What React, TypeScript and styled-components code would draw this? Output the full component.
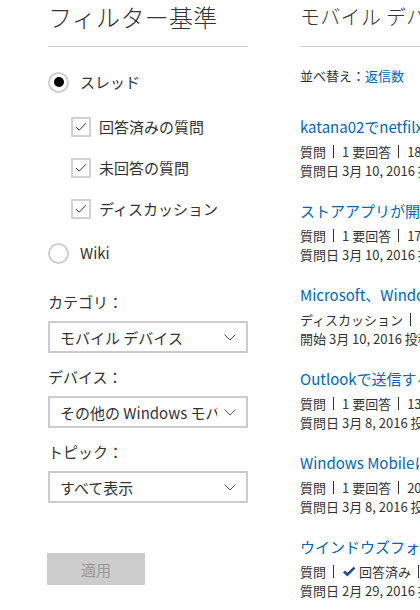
import React from "react";
import styled, {createGlobalStyle} from "styled-components";

const GlobalStyle = createGlobalStyle`
  html, body {
    margin: 0;
    padding: 0;
    background: #fff;
    overflow: hidden;
  }

  body {
    font-family: "Noto Sans CJK JP", "Noto Sans", sans-serif;
    color: #333;
  }
`;

const Page = styled.div`
  display: flex;
  gap: 52px;
  padding-left: 48px;
  width: 900px;
`;

const Sidebar = styled.div`
  display: flex;
  flex-direction: column;
  width: 200px;
  flex-shrink: 0;
`;

const Main = styled.div`
  display: flex;
  flex-direction: column;
  width: 520px;
  flex-shrink: 0;
`;

const Heading = styled.h1<{$size: number}>`
  margin: 1px 0 0 0;
  font-size: ${(p) => p.$size}px;
  font-weight: 300;
  line-height: 32px;
  letter-spacing: 0.3px;
  color: #333;
  white-space: nowrap;
`;

const Divider = styled.div`
  height: 1px;
  margin-top: 13px;
  background: #ccc;
`;

const OptionRow = styled.label<{$indent?: boolean}>`
  display: flex;
  align-items: center;
  gap: ${(p) => (p.$indent ? "8px" : "11px")};
  height: 24px;
  font-size: 15px;
  line-height: 24px;
  white-space: nowrap;
`;

const RadioCircle = styled.span<{$checked?: boolean}>`
  box-sizing: border-box;
  width: 21px;
  height: 21px;
  border-radius: 50%;
  border: 2px solid #cfcfcf;
  display: flex;
  align-items: center;
  justify-content: center;

  &::after {
    content: "";
    width: 10px;
    height: 10px;
    border-radius: 50%;
    background: ${(p) => (p.$checked ? "#000" : "transparent")};
  }
`;

const CheckBox = styled.span`
  box-sizing: border-box;
  width: 20px;
  height: 20px;
  border: 2px solid #d2d2d2;
  display: flex;
  align-items: center;
  justify-content: center;
`;

const ThreadGroup = styled.div`
  display: flex;
  flex-direction: column;
  gap: 17px;
  padding-left: 23px;
  margin-top: 21px;
`;

const FieldLabel = styled.div<{$first?: boolean}>`
  margin-top: ${(p) => (p.$first ? "27px" : "14px")};
  font-size: 15px;
  line-height: 20px;
`;

const SelectBox = styled.div`
  box-sizing: border-box;
  display: flex;
  align-items: center;
  gap: 7px;
  height: 32px;
  margin-top: 9px;
  padding: 0 10px 0 10px;
  border: 2px solid #ccc;
  font-size: 15px;
`;

const SelectValue = styled.span`
  flex: 1;
  overflow: hidden;
  white-space: nowrap;
`;

const ApplyButton = styled.button`
  width: 98px;
  height: 32px;
  margin-top: 50px;
  margin-left: -1px;
  border: none;
  background: #ccc;
  color: #999;
  font-family: inherit;
  font-size: 15px;
`;

const SortLine = styled.div`
  margin-top: 19px;
  font-size: 13px;
  line-height: 20px;
  white-space: nowrap;
`;

const Link = styled.a`
  color: #0067b8;
  text-decoration: none;
`;

const ThreadList = styled.div`
  display: flex;
  flex-direction: column;
  gap: 20px;
  margin-top: 30px;
`;

const Thread = styled.div`
  display: flex;
  flex-direction: column;
`;

const ThreadTitle = styled.a`
  color: #0067b8;
  text-decoration: none;
  font-size: 15px;
  line-height: 22px;
  white-space: nowrap;
  margin-bottom: 4px;
`;

const MetaLine = styled.div`
  display: flex;
  align-items: center;
  font-size: 13px;
  line-height: 19px;
  white-space: pre;
`;

const Sep = styled.span`
  display: inline-block;
  width: 1px;
  height: 13px;
  margin: 0 8px 0 7px;
  background: #333;
`;

const Answered = styled.span`
  display: inline-flex;
  align-items: center;
  gap: 3px;
`;

const Chevron = () => (
  <svg width="12" height="7" viewBox="0 0 12 7" fill="none">
    <polyline points="0.5,0.5 6,6 11.5,0.5" stroke="#555" strokeWidth="1" />
  </svg>
);

const Tick = () => (
  <svg width="12" height="10" viewBox="0 0 12 10" fill="none">
    <polyline points="1,5 4.2,8.2 11,1.2" stroke="#333" strokeWidth="1" />
  </svg>
);

const BoldTick = () => (
  <svg width="14" height="12" viewBox="0 0 14 12">
    <path d="M1 6.2 L3 4.4 L5.4 6.8 L11.6 0.8 L13.4 2.6 L5.4 10.6 Z" fill="#1d4f8c" />
  </svg>
);

type Item = {
  title: string;
  kind: string;
  status: "open" | "answered" | "discussion";
  count: string;
  dateLabel: string;
  date: string;
};

const threads: Item[] = [
  {title: "katana02でnetfilxが見られない", kind: "質問", status: "open", count: "18 表示", dateLabel: "質問日", date: "3月 10, 2016"},
  {title: "ストアアプリが開かない", kind: "質問", status: "open", count: "17 表示", dateLabel: "質問日", date: "3月 10, 2016"},
  {title: "Microsoft、Windows 10 Mobile の配信を開始", kind: "ディスカッション", status: "discussion", count: "1 返信", dateLabel: "開始", date: "3月 10, 2016"},
  {title: "Outlookで送信するとエラーになる", kind: "質問", status: "open", count: "13 表示", dateLabel: "質問日", date: "3月 8, 2016"},
  {title: "Windows Mobileについて", kind: "質問", status: "open", count: "20 表示", dateLabel: "質問日", date: "3月 8, 2016"},
  {title: "ウインドウズフォンのアップデート", kind: "質問", status: "answered", count: "5 返信", dateLabel: "質問日", date: "2月 29, 2016"},
];

const App: React.FC = () => {
  return (
    <>
      <GlobalStyle />
      <Page>
        <Sidebar>
          <Heading $size={24}>フィルター基準</Heading>
          <Divider />
          <OptionRow style={{marginTop: 23}}>
            <RadioCircle $checked />
            スレッド
          </OptionRow>
          <ThreadGroup>
            {["回答済みの質問", "未回答の質問", "ディスカッション"].map((label) => (
              <OptionRow $indent key={label}>
                <CheckBox>
                  <Tick />
                </CheckBox>
                {label}
              </OptionRow>
            ))}
          </ThreadGroup>
          <OptionRow style={{marginTop: 20}}>
            <RadioCircle />
            Wiki
          </OptionRow>

          <FieldLabel $first>カテゴリ：</FieldLabel>
          <SelectBox>
            <SelectValue>モバイル デバイス</SelectValue>
            <Chevron />
          </SelectBox>
          <FieldLabel>デバイス：</FieldLabel>
          <SelectBox>
            <SelectValue>その他の Windows モバイル デバイス</SelectValue>
            <Chevron />
          </SelectBox>
          <FieldLabel>トピック：</FieldLabel>
          <SelectBox>
            <SelectValue>すべて表示</SelectValue>
            <Chevron />
          </SelectBox>

          <ApplyButton disabled>適用</ApplyButton>
        </Sidebar>

        <Main>
          <Heading $size={20}>モバイル デバイス</Heading>
          <Divider />
          <SortLine>
            並べ替え：<Link href="#">返信数</Link>
          </SortLine>
          <ThreadList>
            {threads.map((t) => (
              <Thread key={t.title}>
                <ThreadTitle href="#">{t.title}</ThreadTitle>
                <MetaLine>
                  {t.kind}
                  <Sep />
                  {t.status === "answered" ? (
                    <Answered>
                      <BoldTick />
                      回答済み
                    </Answered>
                  ) : t.status === "discussion" ? (
                    "1 返信"
                  ) : (
                    "1 要回答"
                  )}
                  <Sep />
                  {t.count}
                </MetaLine>
                <MetaLine>
                  {t.dateLabel} {t.date} 投稿者
                </MetaLine>
              </Thread>
            ))}
          </ThreadList>
        </Main>
      </Page>
    </>
  );
};

export default App;
